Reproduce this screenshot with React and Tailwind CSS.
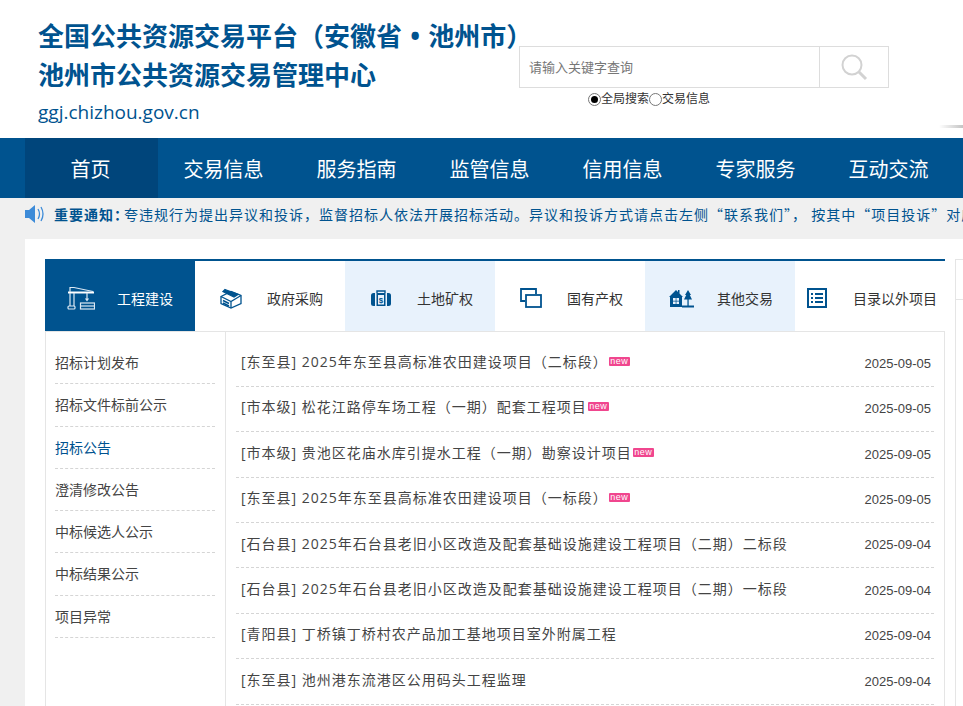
const FONT = "font-['Microsoft_YaHei','Open_Sans','Noto_Sans_CJK_SC',sans-serif]";

const navItems = ['首页', '交易信息', '服务指南', '监管信息', '信用信息', '专家服务', '互动交流'];

const sideItems = [
  { label: '招标计划发布' },
  { label: '招标文件标前公示' },
  { label: '招标公告', active: true },
  { label: '澄清修改公告' },
  { label: '中标候选人公示' },
  { label: '中标结果公示' },
  { label: '项目异常' },
];

const rows = [
  { text: '[东至县] 2025年东至县高标准农田建设项目（二标段）', date: '2025-09-05', isNew: true },
  { text: '[市本级] 松花江路停车场工程（一期）配套工程项目', date: '2025-09-05', isNew: true },
  { text: '[市本级] 贵池区花庙水库引提水工程（一期）勘察设计项目', date: '2025-09-05', isNew: true },
  { text: '[东至县] 2025年东至县高标准农田建设项目（一标段）', date: '2025-09-05', isNew: true },
  { text: '[石台县] 2025年石台县老旧小区改造及配套基础设施建设工程项目（二期）二标段', date: '2025-09-04' },
  { text: '[石台县] 2025年石台县老旧小区改造及配套基础设施建设工程项目（二期）一标段', date: '2025-09-04' },
  { text: '[青阳县] 丁桥镇丁桥村农产品加工基地项目室外附属工程', date: '2025-09-04' },
  { text: '[东至县] 池州港东流港区公用码头工程监理', date: '2025-09-04' },
];

const CraneIcon = () => (
  <svg width="28" height="24" viewBox="0 0 28 24" fill="none" stroke="#dbe8f4" strokeWidth="1.2">
    <path d="M1 6.5h26" strokeWidth="2" stroke="#fff" />
    <path d="M3 6V1.5h4L26 5.5" />
    <path d="M3 7v13M7 7v13" />
    <rect x="1" y="20" width="7" height="3" rx="1" />
    <path d="M20 7v7M18.5 12.5L20 14.5l1.5-2" />
    <rect x="13.5" y="17" width="14" height="6" />
    <path d="M13.5 20h14" />
  </svg>
);

const BoxIcon = () => (
  <svg width="22" height="21" viewBox="0 0 22 20" fill="none" stroke="#00538f" strokeWidth="1.3">
    <path d="M1 8l10-5 10 4v8l-10 4.5L1 15z" />
    <path d="M1 8l10 5 10-6M11 13v6.5" />
    <path d="M5 1l13 5-4 2.5L3 3z" fill="#00538f" />
    <path d="M3 12l6 3M3 14.5l6 3" strokeWidth="1.6" />
  </svg>
);

const CaseIcon = () => (
  <svg width="20" height="17" viewBox="0 0 20 17">
    <path d="M6 3V1h8v2" fill="none" stroke="#00538f" strokeWidth="1.4" />
    <path d="M4 3H2.5Q0 3 0 5.5v8Q0 16 2.5 16H4z" fill="#00538f" />
    <path d="M16 3h1.5Q20 3 20 5.5v8q0 2.5-2.5 2.5H16z" fill="#00538f" />
    <rect x="5.5" y="3" width="9" height="13" fill="#00538f" />
    <rect x="7" y="5" width="6" height="9.5" fill="#e8f2fc" />
    <text x="10" y="13" fontSize="8" fontWeight="700" textAnchor="middle" fill="#00538f" fontFamily="Liberation Sans">$</text>
  </svg>
);

const WindowsIcon = () => (
  <svg width="22" height="20" viewBox="0 0 22 20" fill="none" stroke="#00538f" strokeWidth="1.8">
    <path d="M5 13H1V1h15v5" />
    <rect x="6" y="7" width="15" height="12" fill="#fff" />
  </svg>
);

const HouseIcon = () => (
  <svg width="25" height="19" viewBox="0 0 25 19" fill="#00538f">
    <path d="M0 8L7 1l2 2V1h1.5v3.5L14 8h-1v9H1V8z" />
    <rect x="4" y="9" width="6" height="6" fill="#e8f2fc" />
    <path d="M6.7 9h.7v6h-.7zM4 11.7h6v.7H4z" />
    <path d="M19 1l3 5h-1.2l2.2 4.5H15l2.2-4.5H16z" />
    <rect x="18.4" y="10" width="1.3" height="7" />
    <rect x="13" y="16.5" width="12" height="2" />
    <rect x="1" y="16" width="12" height="2" />
  </svg>
);

const ListIcon = () => (
  <svg width="20" height="20" viewBox="0 0 20 20" fill="none" stroke="#00538f">
    <rect x="1" y="1" width="18" height="18" strokeWidth="2" />
    <path d="M4 6h2M4 10h2M4 14h2M8 6h8M8 10h8M8 14h8" strokeWidth="1.8" />
  </svg>
);

const tabs = [
  { label: '工程建设', icon: <CraneIcon />, active: true, iconBox: 'w-[72px]' },
  { label: '政府采购', icon: <BoxIcon />, iconBox: 'w-[72px]' },
  { label: '土地矿权', icon: <CaseIcon />, tint: true, iconBox: 'w-[72px]' },
  { label: '国有产权', icon: <WindowsIcon />, iconBox: 'w-[72px]' },
  { label: '其他交易', icon: <HouseIcon />, tint: true, iconBox: 'w-[72px]' },
  { label: '目录以外项目', icon: <ListIcon />, iconBox: 'w-[44px] mr-[14px]' },
];

const App = () => {
  return (
    <div className={`w-[963px] h-[706px] overflow-hidden bg-[#f0f0f0] ${FONT}`}>
      {/* header */}
      <header className="relative h-[138px] bg-white flex">
        <div className="pl-[38px] pt-[17px] w-[519px] shrink-0 whitespace-nowrap">
          <h1 className="text-[26px] leading-[39px] font-bold text-[#00538f]">
            全国公共资源交易平台（安徽省<span className="mx-[1.5px]"> • </span>池州市）
          </h1>
          <h2 className="text-[26px] leading-[39px] font-bold text-[#00538f]">池州市公共资源交易管理中心</h2>
          <p className="text-[19px] leading-[27px] mt-[4px] text-[#00538f]">ggj.chizhou.gov.cn</p>
        </div>
        <div className="pt-[46px]">
          <div className="flex w-[370px] h-[42px] border border-[#ddd] box-border">
            <div className="w-[300px] pl-[9px] border-r border-[#ddd] text-[13px] leading-[40px] text-[#777]">请输入关键字查询</div>
            <div className="flex-1 flex items-center justify-center">
              <svg width="28" height="28" viewBox="0 0 28 28" fill="none" stroke="#d2d2d2">
                <circle cx="12" cy="12" r="9.5" strokeWidth="2" />
                <path d="M19 19l7 7" strokeWidth="3" />
              </svg>
            </div>
          </div>
          <div className="flex items-center pl-[69px] mt-[2px] text-[12px] leading-[18px] text-[#333]">
            <span className="w-[13px] h-[13px] rounded-full border border-[#777] flex items-center justify-center">
              <span className="w-[7px] h-[7px] rounded-full bg-black" />
            </span>
            <span>全局搜索</span>
            <span className="w-[13px] h-[13px] rounded-full border border-[#777]" />
            <span>交易信息</span>
          </div>
        </div>
        <div className="absolute right-0 top-[125px] w-[24px] h-[3px] bg-gradient-to-r from-white to-[#c4c4c4]" />
      </header>

      {/* nav */}
      <nav className="h-[60px] bg-[#00538f] flex pl-[25px]">
        {navItems.map((item, i) => (
          <a key={item} className={`w-[133px] h-[60px] pr-[2px] text-center text-[20px] leading-[63px] text-white ${i === 0 ? 'bg-[#00457b]' : ''}`}>
            {item}
          </a>
        ))}
      </nav>

      {/* notice */}
      <div className="h-[41px] flex items-start pl-[25px] pt-[6px] whitespace-nowrap text-[14px] leading-[20px] tracking-[1px] text-[#00538f] font-['Noto_Sans_CJK_SC',sans-serif]">
        <svg className="shrink-0 mt-[1px]" width="20" height="18" viewBox="0 0 20 18">
          <path d="M0 5h4l6-5v18l-6-5H0z" fill="#3d8bd8" />
          <path d="M13 4q3 5 0 10M16 2q4 7 0 14" fill="none" stroke="#3d8bd8" strokeWidth="1.3" />
        </svg>
        <b className="ml-[9px] font-bold">重要通知：</b>
        <span className="-ml-[5px]">夸违规行为提出异议和投诉，监督招标人依法开展招标活动。异议和投诉方式请点击左侧“联系我们”， 按其中“项目投诉”对应联系方式进行投诉</span>
      </div>

      {/* content */}
      <main className="ml-[25px] h-[467px] bg-white flex pl-[20px] pt-[20px]">
        <section className="w-[900px] shrink-0">
          <div className="flex h-[72px] border-t-2 border-[#00538f]">
            {tabs.map((tab) => (
              <div
                key={tab.label}
                className={`w-[150px] pt-[4px] flex items-center text-[14px] whitespace-nowrap ${tab.active ? 'bg-[#00538f] text-white' : tab.tint ? 'bg-[#e8f2fc] text-[#333]' : 'bg-white text-[#333]'}`}
              >
                <span className={`${tab.iconBox} flex justify-center`}>{tab.icon}</span>
                <span>{tab.label}</span>
              </div>
            ))}
          </div>
          <div className="flex border border-[#e5e5e5] h-[400px] box-border">
            <aside className="w-[180px] shrink-0 border-r border-[#e5e5e5] pl-[9px] pr-[10px] pt-[10px]">
              {sideItems.map((item) => (
                <a
                  key={item.label}
                  className={`block h-[42.3px] leading-[41px] text-[14px] border-b border-dashed border-[#d5d5d5] ${item.active ? 'text-[#00538f]' : 'text-[#444]'}`}
                >
                  {item.label}
                </a>
              ))}
            </aside>
            <div className="flex-1 px-[10px] pt-[9.4px]">
              {rows.map((row) => (
                <div key={row.text} className="h-[45.4px] flex items-center justify-between pl-[5px] pr-[3px] border-b border-dashed border-[#d5d5d5]">
                  <div className="flex items-start pb-[4px] text-[14px] tracking-[1px] text-[#444] whitespace-nowrap">
                    <span>{row.text}</span>
                    {row.isNew && (
                      <span className="mt-[6px] ml-[1px] h-[9px] w-[21px] rounded-[1px] bg-[#f0468e] text-white text-[9px] leading-[9px] tracking-[0.5px] text-center font-['Liberation_Sans',sans-serif]">new</span>
                    )}
                  </div>
                  <span className="text-[13px] text-[#444] font-['Liberation_Sans',sans-serif]">{row.date}</span>
                </div>
              ))}
            </div>
          </div>
        </section>
        <aside className="ml-[10px] w-[100px] h-[460px] shrink-0 border border-[#e5e5e5]">
          <div className="h-[40px] border-b border-[#e5e5e5]" />
        </aside>
      </main>
    </div>
  );
};

export default App;
